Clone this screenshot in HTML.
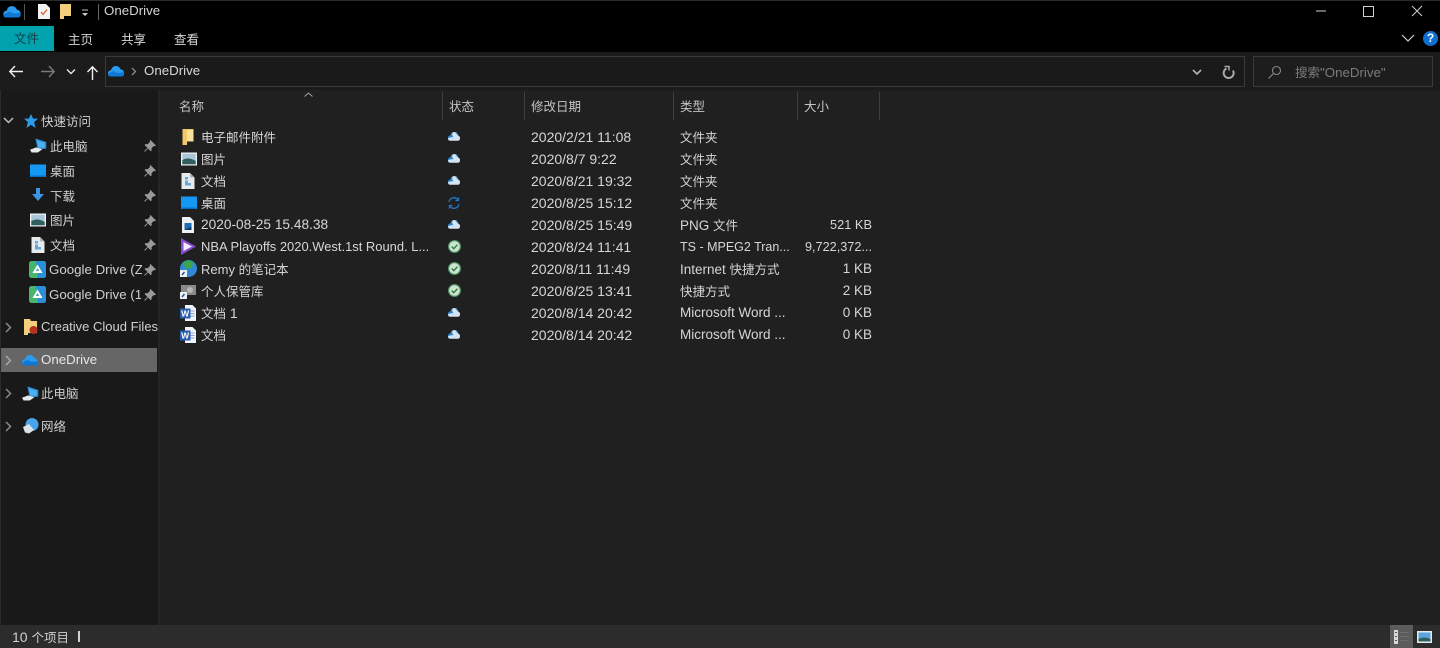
<!DOCTYPE html>
<html lang="zh-CN"><head><meta charset="utf-8"><title>OneDrive</title>
<style>
html,body{margin:0;padding:0;width:1440px;height:648px;overflow:hidden;background:#202020}
body{position:relative;font-family:"Liberation Sans","Noto Sans CJK SC",sans-serif;font-size:14px;color:#d6d6d6}
.b{position:absolute}
.t{position:absolute;line-height:20px;height:20px;white-space:nowrap;filter:blur(.3px)}
.t i{font-style:normal;font-size:12.5px;font-family:"Noto Sans CJK SC","Liberation Sans",sans-serif}
.s{color:#d0d0d0}
.z{font-size:13px}
svg{position:absolute;overflow:visible}
</style></head><body>
<svg width="0" height="0" style="position:absolute">
<defs>
<symbol id="folder" viewBox="0 0 16 16"><path d="M2.500 0h11v12.500H7V16H2.500z" fill="#f2c766"/><path d="M7 1h6.500v11.500H7z" fill="#fbe09a"/></symbol>
<symbol id="pic" viewBox="0 0 16 16"><rect x="0" y="1.500" width="16" height="13" fill="#eef2f4"/><rect x="1.300" y="2.800" width="13.400" height="10.400" fill="#a9c6d9"/><path d="M1.300 9q6-3.500 13.400 1v3.200H1.300z" fill="#2f5f5c"/></symbol>
<symbol id="doc" viewBox="0 0 16 16"><path d="M1.500 0h8.500l4.500 4.500V16h-13z" fill="#e8ebee"/><path d="M10 0v4.500h4.500z" fill="#aab3ba"/><path d="M5 4h3v2.500H5zm0 3.500h3V10h3v2.500H5z" fill="#62a9da"/></symbol>
<symbol id="desk" viewBox="0 0 16 16"><path d="M0 1.500h16V14H0z" fill="#1598f4"/><path d="M1 14h14l1-1.500H0z" fill="#0c6cc0"/></symbol>
<symbol id="png" viewBox="0 0 16 16"><path d="M2 0h8l4 4v12H2z" fill="#eef1f4"/><rect x="4.500" y="6" width="7" height="7" fill="#1c6fb5"/><path d="M4.500 13l7-3.500V13z" fill="#0c3d66"/></symbol>
<symbol id="word" viewBox="0 0 16 16"><path d="M5 0h7.500L16 3.500V16H5z" fill="#f0f3f7"/><path d="M10 6h4.500M10 8.500h4.500M10 11h4.500" stroke="#8aa5d0"/><rect x="0" y="3.500" width="10.500" height="10" fill="#2a5db0"/><text x="5.200" y="11.700" font-size="8.500" font-weight="700" fill="#fff" text-anchor="middle" font-family="Liberation Sans">W</text></symbol>
<symbol id="up" viewBox="0 0 12 9"><path d="M0 6.300Q0 3.800 2.300 3.600 3.500 0 6.500 0 9.800 0 10.200 3.600 12 3.900 12 6.300 12 8.800 9.800 8.800H2.200Q0 8.800 0 6.300z" fill="#d3e4f3"/><path d="M0 6.300Q0 3.800 2.300 3.600 3 1.500 4.500.6 3.500 4.500 6 5 2.500 5 0 6.300z" fill="#2a86d0"/><path d="M7 0Q9.800.3 10.200 3.600 8.300 2 7 0z" fill="#2a86d0"/></symbol>
<symbol id="ok" viewBox="0 0 13 13"><circle cx="6.500" cy="6.500" r="6.500" fill="#4f9460"/><circle cx="6.500" cy="6.500" r="5.300" fill="#cfe3d3"/><path d="M3.700 6.500l2.100 2.200 3.600-4" fill="none" stroke="#2f7a40" stroke-width="1.400"/></symbol>
<symbol id="pin" viewBox="0 0 12 12"><path d="M6.500 0l5.500 5.500-1.200.8-1-.3-2.300 2.300.2 2-1 1L4 8.500 1 11.800.2 11 3.500 8 .6 5l1-1 2 .2L6 1.900l-.3-1z" fill="#9a9a9a"/></symbol>
<symbol id="pc" viewBox="0 0 22 18"><path d="M7 0l14 4.500V13l-11 1z" fill="#2e93dd"/><path d="M9 2.500l10 3.200v5.800l-8 .8z" fill="#4fb0ef"/><path d="M0 14.500l8-3 8 2.500-6 4H2z" fill="#e4e8ea"/></symbol>
<symbol id="gd" viewBox="0 0 17 17"><rect width="17" height="17" rx="2.500" fill="#48b56d"/><path d="M7 0h7.500A2.500 2.500 0 0 1 17 2.500v12a2.500 2.500 0 0 1-2.500 2.500H9z" fill="#2a8fd8"/><path d="M8.500 3.500L13.500 12h-10z" fill="#fff"/><path d="M8.500 7l1.700 3H6.800z" fill="#45a0b0"/></symbol>
<symbol id="cl" viewBox="0 0 16 12"><path d="M0 8.500Q0 5.500 3 5.300 4 1 8 1 11.200 1 12.500 4.300 16 4.800 16 8.500 16 11.500 13.200 11.500H2.500Q0 11.500 0 8.500z" fill="#2a9cf0"/><path d="M0 8.800L5.500 6l4 2 6.400-.8Q16.600 11.500 13.200 11.500H2.500Q.2 11.500 0 8.800z" fill="#0f78d4"/></symbol>
</defs></svg>

<!-- backgrounds -->
<div class="b" style="left:0;top:0;width:1440px;height:52px;background:#000"></div>
<div class="b" style="left:0;top:0;width:1440px;height:1px;background:#2b2b2b"></div>
<div class="b" style="left:0;top:52px;width:1440px;height:38px;background:#1b1b1b"></div>
<div class="b" style="left:0;top:90px;width:158px;height:535px;background:#191919"></div>
<div class="b" style="left:158px;top:90px;width:2px;height:535px;background:#252525"></div>
<div class="b" style="left:0;top:90px;width:1px;height:558px;background:#2b2b2b"></div>
<div class="b" style="left:0;top:625px;width:1440px;height:23px;background:#2c2c2c"></div>

<!-- title bar -->
<svg style="left:3px;top:5px" width="18" height="13"><use href="#cl" width="18" height="13"/></svg>
<div class="b" style="left:24px;top:4px;width:1px;height:16px;background:#555"></div>
<svg style="left:38px;top:4px" width="12" height="15"><path d="M0 0h8l4 4v11H0z" fill="#f2f2f2"/><path d="M3 8l2 2.500 4-5" fill="none" stroke="#d9622b" stroke-width="1.300"/></svg>
<svg style="left:60px;top:4px" width="11" height="15"><path d="M0 0h11v12H4v3H0z" fill="#f2cf7a"/></svg>
<svg style="left:81px;top:9px" width="8" height="8"><path d="M1 1h6" stroke="#bbb"/><path d="M1 4h6L4 7z" fill="#ccc"/></svg>
<div class="b" style="left:98px;top:4px;width:1px;height:16px;background:#666"></div>
<div class="t" style="left:104px;top:1px;color:#d4d4d4;font-size:13.300px">OneDrive</div>
<svg style="left:1316px;top:6px" width="115" height="12" fill="none" stroke="#cfcfcf"><path d="M0 5h10"/><rect x="47.500" y="0.500" width="10" height="10"/><path d="M96 0l10 10M106 0L96 10"/></svg>

<!-- ribbon -->
<div class="b" style="left:0;top:26px;width:54px;height:25px;background:#00a2ad"></div>
<div class="t" style="left:14px;top:28px;color:#123c44"><i>文件</i></div>
<div class="t" style="left:68px;top:29px"><i>主页</i></div>
<div class="t" style="left:121px;top:29px"><i>共享</i></div>
<div class="t" style="left:174px;top:29px"><i>查看</i></div>
<svg style="left:1401px;top:34px" width="14" height="9"><path d="M1 1l6 6 6-6" fill="none" stroke="#cfcfcf" stroke-width="1.200"/></svg>
<div class="b" style="left:1423px;top:31px;width:15px;height:15px;border-radius:50%;background:#0f6fd0;color:#fff;font:700 12px/15px 'Liberation Sans',sans-serif;text-align:center">?</div>

<!-- nav bar -->
<svg style="left:9px;top:65px" width="92" height="16" fill="none" stroke-width="1.400">
<path d="M14 6.500H1M6 1L.8 6.500 6 12" stroke="#f0f0f0"/>
<path d="M45 6.500H32M40 1l5.200 5.500L40 12" stroke="#7a7a7a"/>
<path d="M58 4.500l4 4 4-4" stroke="#e6e6e6"/>
<path d="M83.500 15V2M78.500 7l5-5.200 5 5.200" stroke="#f0f0f0"/>
</svg>
<div class="b" style="left:105px;top:56px;width:1138px;height:29px;background:#1a1a1a;border:1px solid #3a3a3a"></div>
<svg style="left:108px;top:65px" width="16" height="12"><use href="#cl" width="16" height="12"/></svg>
<svg style="left:131px;top:67px" width="6" height="9"><path d="M1 1l3.500 3.500L1 8" fill="none" stroke="#8a8a8a" stroke-width="1.300"/></svg>
<div class="t" style="left:144px;top:61px;color:#d8d8d8;font-size:13.300px">OneDrive</div>
<svg style="left:1192px;top:69px" width="10" height="7"><path d="M1 1l4 4 4-4" fill="none" stroke="#b5b5b5" stroke-width="1.600"/></svg>
<svg style="left:1223px;top:66px" width="12" height="13" fill="none" stroke="#a8a8a8" stroke-width="2"><path d="M3.500 2.500A5 5 0 1 0 10 4.500"/><path d="M1.500 .5h4.500v4" stroke-width="1.500"/></svg>
<div class="b" style="left:1253px;top:56px;width:178px;height:29px;background:#1d1d1d;border:1px solid #3a3a3a"></div>
<svg style="left:1268px;top:66px" width="14" height="13" fill="none" stroke="#8a8a8a" stroke-width="1.100"><circle cx="8.500" cy="4.500" r="4"/><path d="M5.500 7.500L.5 12.500"/></svg>
<div class="t" style="left:1295px;top:62px;color:#7c7c7c;font-size:13.300px"><i>搜索</i>"OneDrive"</div>

<!-- sidebar -->
<svg style="left:3px;top:117px" width="11" height="8"><path d="M1 1l4.500 4.500L10 1" fill="none" stroke="#c0c0c0" stroke-width="1.500"/></svg>
<svg style="left:24px;top:114px" width="14" height="14" viewBox="0 0 12 12"><path d="M6 0l1.800 4H12L8.700 7l1.200 5L6 9.300 2.100 12l1.200-5L0 4h4.200z" fill="#2b9bea"/></svg>
<div class="t s" style="left:41px;top:111px"><i>快速访问</i></div>

<svg style="left:30px;top:138px" width="17" height="15"><use href="#pc" width="17" height="15"/></svg>
<div class="t s" style="left:50px;top:136px"><i>此电脑</i></div>
<svg style="left:30px;top:163px" width="16" height="16"><use href="#desk" width="16" height="16"/></svg>
<div class="t s" style="left:50px;top:161px"><i>桌面</i></div>
<svg style="left:32px;top:188px" width="12" height="14"><path d="M4 0h4v6h4l-6 7-6-7h4z" fill="#3b95e0"/></svg>
<div class="t s" style="left:50px;top:186px"><i>下载</i></div>
<svg style="left:30px;top:212px" width="16" height="16"><use href="#pic" width="16" height="16"/></svg>
<div class="t s" style="left:50px;top:210px"><i>图片</i></div>
<svg style="left:30px;top:237px" width="16" height="16"><use href="#doc" width="16" height="16"/></svg>
<div class="t s" style="left:50px;top:235px"><i>文档</i></div>
<svg style="left:29px;top:261px" width="17" height="17"><use href="#gd" width="17" height="17"/></svg>
<div class="t s" style="left:49px;top:260px;font-size:13.300px;width:93px;overflow:hidden">Google Drive (Z</div>
<svg style="left:29px;top:286px" width="17" height="17"><use href="#gd" width="17" height="17"/></svg>
<div class="t s" style="left:49px;top:285px;font-size:13.300px;width:92px;overflow:hidden">Google Drive (1</div>
<svg style="left:144px;top:140px" width="12" height="12"><use href="#pin" width="12" height="12"/></svg>
<svg style="left:144px;top:165px" width="12" height="12"><use href="#pin" width="12" height="12"/></svg>
<svg style="left:144px;top:190px" width="12" height="12"><use href="#pin" width="12" height="12"/></svg>
<svg style="left:144px;top:215px" width="12" height="12"><use href="#pin" width="12" height="12"/></svg>
<svg style="left:144px;top:239px" width="12" height="12"><use href="#pin" width="12" height="12"/></svg>
<svg style="left:144px;top:264px" width="12" height="12"><use href="#pin" width="12" height="12"/></svg>
<svg style="left:144px;top:289px" width="12" height="12"><use href="#pin" width="12" height="12"/></svg>

<svg style="left:5px;top:322px" width="7" height="11"><path d="M1 1l4.500 4.500L1 10" fill="none" stroke="#8a8a8a" stroke-width="1.500"/></svg>
<svg style="left:24px;top:319px" width="14" height="16"><path d="M0 0h6l1 2h6v12H4v2H0z" fill="#f2cf7a"/><circle cx="9.500" cy="11" r="4" fill="#b5301f"/></svg>
<div class="t s" style="left:41px;top:317px;font-size:13px">Creative Cloud Files</div>

<div class="b" style="left:1px;top:348px;width:156px;height:24px;background:#666"></div>
<svg style="left:5px;top:355px" width="7" height="11"><path d="M1 1l4.500 4.500L1 10" fill="none" stroke="#a8a8a8" stroke-width="1.500"/></svg>
<svg style="left:22px;top:354px" width="16" height="12"><use href="#cl" width="16" height="12"/></svg>
<div class="t" style="left:41px;top:350px;color:#e6e6e6;font-size:13.300px">OneDrive</div>

<svg style="left:5px;top:388px" width="7" height="11"><path d="M1 1l4.500 4.500L1 10" fill="none" stroke="#8a8a8a" stroke-width="1.500"/></svg>
<svg style="left:22px;top:386px" width="17" height="15"><use href="#pc" width="17" height="15"/></svg>
<div class="t s" style="left:41px;top:383px"><i>此电脑</i></div>
<svg style="left:5px;top:421px" width="7" height="11"><path d="M1 1l4.500 4.500L1 10" fill="none" stroke="#8a8a8a" stroke-width="1.500"/></svg>
<svg style="left:23px;top:418px" width="15" height="16"><circle cx="9" cy="6.500" r="6.500" fill="#4aa3e6"/><path d="M0 9l6-3 5 6-5 3.500-4-1z" fill="#d8e4ea"/></svg>
<div class="t s" style="left:41px;top:416px"><i>网络</i></div>

<!-- header -->
<div class="t" style="left:179px;top:96px;color:#c4c4c4"><i>名称</i></div>
<svg style="left:304px;top:92px" width="9" height="5"><path d="M.5 4.500L4.500 1l4 3.500" fill="none" stroke="#a0a0a0"/></svg>
<div class="t" style="left:449px;top:96px;color:#c4c4c4"><i>状态</i></div>
<div class="t" style="left:531px;top:96px;color:#c4c4c4"><i>修改日期</i></div>
<div class="t" style="left:680px;top:96px;color:#c4c4c4"><i>类型</i></div>
<div class="t" style="left:804px;top:96px;color:#c4c4c4"><i>大小</i></div>
<div class="b" style="left:442px;top:92px;width:1px;height:28px;background:#3f3f3f"></div>
<div class="b" style="left:524px;top:92px;width:1px;height:28px;background:#3f3f3f"></div>
<div class="b" style="left:673px;top:92px;width:1px;height:28px;background:#3f3f3f"></div>
<div class="b" style="left:797px;top:92px;width:1px;height:28px;background:#3f3f3f"></div>
<div class="b" style="left:879px;top:92px;width:1px;height:28px;background:#3f3f3f"></div>

<!-- rows: icons -->
<svg style="left:180px;top:129px" width="16" height="16"><use href="#folder" width="16" height="16"/></svg>
<svg style="left:181px;top:151px" width="16" height="16"><use href="#pic" width="16" height="16"/></svg>
<svg style="left:180px;top:173px" width="16" height="16"><use href="#doc" width="16" height="16"/></svg>
<svg style="left:181px;top:195px" width="16" height="16"><use href="#desk" width="16" height="16"/></svg>
<svg style="left:180px;top:217px" width="16" height="16"><use href="#png" width="16" height="16"/></svg>
<svg style="left:180px;top:238px" width="17" height="18"><path d="M1 0l15 8.500L1 17z" fill="#8a4bd0"/><path d="M3.500 4l8.500 4.500-8.500 4.500z" fill="#f2eefc"/></svg>
<svg style="left:180px;top:260px" width="17" height="17"><circle cx="8.500" cy="8.500" r="8.500" fill="#2f88d6"/><path d="M3 3q4-4.500 10-1l-1 6-6 1z" fill="#3da64a"/><rect x="0" y="10" width="7" height="7" fill="#f0f0f0"/><path d="M2 15l2.500-3" stroke="#1a56a8" stroke-width="1.500"/></svg>
<svg style="left:180px;top:283px" width="16" height="16"><rect x="1" y="2" width="15" height="10" fill="#8a8a8a"/><circle cx="10" cy="7" r="3" fill="#b5b5b5"/><rect x="0" y="9" width="7" height="7" fill="#f0f0f0"/><path d="M2 14l2.500-3" stroke="#1a56a8" stroke-width="1.500"/></svg>
<svg style="left:180px;top:305px" width="16" height="16"><use href="#word" width="16" height="16"/></svg>
<svg style="left:180px;top:327px" width="16" height="16"><use href="#word" width="16" height="16"/></svg>

<!-- rows: names -->
<div class="t" style="left:201px;top:127px"><i>电子邮件附件</i></div>
<div class="t" style="left:201px;top:149px"><i>图片</i></div>
<div class="t" style="left:201px;top:171px"><i>文档</i></div>
<div class="t" style="left:201px;top:193px"><i>桌面</i></div>
<div class="t" style="left:201px;top:215px;font-size:13.700px">2020-08-25 15.48.38</div>
<div class="t" style="left:201px;top:237px;font-size:12.950px">NBA Playoffs 2020.West.1st Round. L...</div>
<div class="t z" style="left:201px;top:259px">Remy <i>的笔记本</i></div>
<div class="t" style="left:201px;top:281px"><i>个人保管库</i></div>
<div class="t" style="left:201px;top:303px"><i>文档</i> 1</div>
<div class="t" style="left:201px;top:325px"><i>文档</i></div>

<!-- rows: status -->
<svg style="left:448px;top:132px" width="12" height="9"><use href="#up" width="12" height="9"/></svg>
<svg style="left:448px;top:154px" width="12" height="9"><use href="#up" width="12" height="9"/></svg>
<svg style="left:448px;top:176px" width="12" height="9"><use href="#up" width="12" height="9"/></svg>
<svg style="left:448px;top:197px" width="12" height="12" fill="none" stroke="#1f78c8" stroke-width="1.300"><path d="M1 5A5 5 0 0 1 10 2.800M11 7A5 5 0 0 1 2 9.200"/><path d="M10.500.5v3h-3M1.500 11.500v-3h3"/></svg>
<svg style="left:448px;top:220px" width="12" height="9"><use href="#up" width="12" height="9"/></svg>
<svg style="left:448px;top:240px" width="13" height="13"><use href="#ok" width="13" height="13"/></svg>
<svg style="left:448px;top:262px" width="13" height="13"><use href="#ok" width="13" height="13"/></svg>
<svg style="left:448px;top:284px" width="13" height="13"><use href="#ok" width="13" height="13"/></svg>
<svg style="left:448px;top:308px" width="12" height="9"><use href="#up" width="12" height="9"/></svg>
<svg style="left:448px;top:330px" width="12" height="9"><use href="#up" width="12" height="9"/></svg>

<!-- rows: dates -->
<div class="t" style="left:531px;top:127px">2020/2/21 11:08</div>
<div class="t" style="left:531px;top:149px">2020/8/7 9:22</div>
<div class="t" style="left:531px;top:171px">2020/8/21 19:32</div>
<div class="t" style="left:531px;top:193px">2020/8/25 15:12</div>
<div class="t" style="left:531px;top:215px">2020/8/25 15:49</div>
<div class="t" style="left:531px;top:237px">2020/8/24 11:41</div>
<div class="t" style="left:531px;top:259px">2020/8/11 11:49</div>
<div class="t" style="left:531px;top:281px">2020/8/25 13:41</div>
<div class="t" style="left:531px;top:303px">2020/8/14 20:42</div>
<div class="t" style="left:531px;top:325px">2020/8/14 20:42</div>

<!-- rows: type -->
<div class="t" style="left:680px;top:127px"><i>文件夹</i></div>
<div class="t" style="left:680px;top:149px"><i>文件夹</i></div>
<div class="t" style="left:680px;top:171px"><i>文件夹</i></div>
<div class="t" style="left:680px;top:193px"><i>文件夹</i></div>
<div class="t" style="left:680px;top:215px;font-size:13.500px">PNG <i>文件</i></div>
<div class="t" style="left:680px;top:237px;font-size:12.500px">TS - MPEG2 Tran...</div>
<div class="t" style="left:680px;top:259px;font-size:13.500px">Internet <i>快捷方式</i></div>
<div class="t" style="left:680px;top:281px"><i>快捷方式</i></div>
<div class="t" style="left:680px;top:303px;font-size:13.500px">Microsoft Word ...</div>
<div class="t" style="left:680px;top:325px;font-size:13.500px">Microsoft Word ...</div>

<!-- rows: size -->
<div class="t" style="right:568px;top:215px;font-size:12.800px">521 KB</div>
<div class="t" style="right:568px;top:237px;font-size:12.700px">9,722,372...</div>
<div class="t" style="right:568px;top:259px;font-size:13.500px">1 KB</div>
<div class="t" style="right:568px;top:281px;font-size:13.500px">2 KB</div>
<div class="t" style="right:568px;top:303px;font-size:13.500px">0 KB</div>
<div class="t" style="right:568px;top:325px;font-size:13.500px">0 KB</div>

<!-- status bar -->
<div class="t" style="left:12px;top:627px;color:#cfcfcf">10 <i>个项目</i></div>
<div class="b" style="left:78px;top:631px;width:2px;height:11px;background:#d0d0d0"></div>
<div class="b" style="left:1390px;top:625px;width:23px;height:23px;background:#5c5c5c"></div>
<svg style="left:1394px;top:630px" width="16" height="14"><rect x="0" y="0" width="4" height="14" fill="#d8d8d8"/><path d="M1 2.500h2M1 6.500h2M1 10.500h2" stroke="#555"/><path d="M6 2.500h9M6 6.500h9M6 10.500h9" stroke="#6e6e6e"/></svg>
<svg style="left:1417px;top:631px" width="15" height="12"><rect width="15" height="12" fill="#e4ebef"/><rect x="1.500" y="1.500" width="12" height="9" fill="#5aa6dc"/><path d="M1.500 8q5-3 12 0v2.500h-12z" fill="#2f5f5c"/></svg>
</body></html>
